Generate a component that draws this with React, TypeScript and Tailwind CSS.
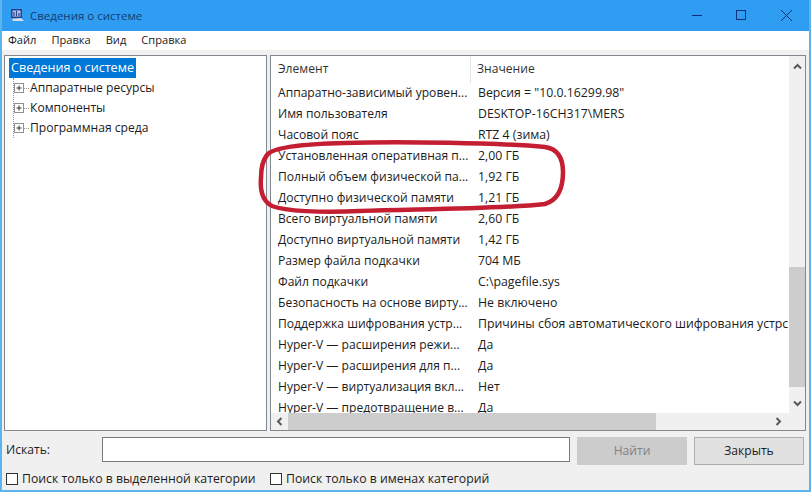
const rows = [
  ['Аппаратно-зависимый уровен...', 'Версия = "10.0.16299.98"'],
  ['Имя пользователя', 'DESKTOP-16CH317\\MERS'],
  ['Часовой пояс', 'RTZ 4 (зима)'],
  ['Установленная оперативная п...', '2,00 ГБ'],
  ['Полный объем физической па...', '1,92 ГБ'],
  ['Доступно физической памяти', '1,21 ГБ'],
  ['Всего виртуальной памяти', '2,60 ГБ'],
  ['Доступно виртуальной памяти', '1,42 ГБ'],
  ['Размер файла подкачки', '704 МБ'],
  ['Файл подкачки', 'C:\\pagefile.sys'],
  ['Безопасность на основе вирту...', 'Не включено'],
  ['Поддержка шифрования устр...', 'Причины сбоя автоматического шифрования устрс'],
  ['Hyper-V — расширения режи...', 'Да'],
  ['Hyper-V — расширения для п...', 'Да'],
  ['Hyper-V — виртуализация вкл...', 'Нет'],
  ['Hyper-V — предотвращение в...', 'Да'],
];

function Expander() {
  return (
    <svg width="10" height="10" viewBox="0 0 10 10" className="shrink-0">
      <rect x="0.5" y="0.5" width="9" height="9" fill="#fff" stroke="#8f8f8f" />
      <path d="M2.5 5H7.5M5 2.5V7.5" stroke="#333" />
    </svg>
  );
}

function TreeItem({ label }: { label: string }) {
  return (
    <div className="flex items-center h-5 pl-[5px]">
      <Expander />
      <div className="w-[5px] border-t border-dotted border-[#999]" />
      <span className="ml-px">{label}</span>
    </div>
  );
}

function Arrow({ d, className }: { d: string; className: string }) {
  return (
    <svg width="9" height="7" viewBox="0 0 9 7" className={className}>
      <path d={d} fill="none" stroke="#5a5a5a" strokeWidth="2" />
    </svg>
  );
}

export default function App() {
  return (
    <div className="relative w-[811px] h-[492px] overflow-hidden bg-[#f0f0f0] border-x-2 border-b-2 border-[#5cb4ec] font-['Open_Sans','Noto_Sans',sans-serif] text-[12.1px] text-[#1c1c1c]">
      {/* title bar */}
      <div className="-mx-[2px] h-[31px] bg-[#2f9df2] flex items-center pl-[10px]">
        <svg width="15" height="15" viewBox="0 0 15 15" className="shrink-0">
          <rect x="1" y="1" width="11" height="9" fill="#27408f" />
          <rect x="2.5" y="2.5" width="8" height="6" fill="#b9c9ea" />
          <path d="M4 8V4M6.5 8V3M9 8V5" stroke="#27408f" strokeWidth="1.2" />
          <path d="M2 11L11 10L14 13H3Z" fill="#d8dde8" />
        </svg>
        <span className="ml-[5px] text-[11.5px] text-[#123c72]">Сведения о системе</span>
        <svg width="100" height="12" viewBox="0 0 100 12" className="ml-auto mr-[19px]">
          <path d="M0 5.5H10" stroke="#12307a" />
          <rect x="44.5" y="0.5" width="9" height="9" fill="none" stroke="#12307a" />
          <path d="M89 0L100 11M100 0L89 11" stroke="#12307a" />
        </svg>
      </div>

      {/* menu */}
      <div className="-mx-[2px] pl-[8px] h-[19px] bg-white flex items-center gap-[15px] text-[11.1px]">
        <span>Файл</span>
        <span>Правка</span>
        <span>Вид</span>
        <span>Справка</span>
      </div>

      {/* panes */}
      <div className="flex gap-[3px] mt-[5px] ml-[2px] h-[376px] w-[802px]">
        <div className="w-[263px] bg-white border border-[#828790] pt-[2px] pl-[4px]">
          <div className="w-fit h-5 px-[2px] flex items-center bg-[#0078d7] text-white text-[12.6px]">Сведения о системе</div>
          <div className="border-l border-dotted border-[#999] ml-[5px] h-[60px] -translate-x-[1px] -mb-[60px]" />
          <TreeItem label="Аппаратные ресурсы" />
          <TreeItem label="Компоненты" />
          <TreeItem label="Программная среда" />
        </div>

        <div className="w-[536px] bg-white border border-[#828790] flex flex-col">
          <div className="flex flex-1 min-h-0">
            <div className="flex-1 min-w-0 overflow-hidden">
              <div className="flex h-[27px] items-center text-[#333]">
                <div className="w-[200px] pl-[7px] h-full flex items-center border-r border-[#e5e5e5]">Элемент</div>
                <div className="pl-[6px]">Значение</div>
              </div>
              {rows.map(([name, value]) => (
                <div key={name} className="flex h-[21px] items-center whitespace-nowrap">
                  <div className="w-[200px] pl-[7px] shrink-0">{name}</div>
                  <div className="pl-[7px] text-[12.3px]">{value}</div>
                </div>
              ))}
            </div>
            <div className="w-[16px] bg-[#f0f0f0] flex flex-col items-center">
              <Arrow d="M1 5.5L4.5 2L8 5.5" className="mt-[7px]" />
              <div className="w-full h-[120px] bg-[#cdcdcd] mt-[197px]" />
              <Arrow d="M1 1.5L4.5 5L8 1.5" className="mt-[13px]" />
            </div>
          </div>
          <div className="h-[17px] bg-[#f0f0f0] flex items-center pl-[5px]">
            <svg width="7" height="9" viewBox="0 0 7 9" className="shrink-0">
              <path d="M5.5 1L2 4.5L5.5 8" fill="none" stroke="#5a5a5a" strokeWidth="2" />
            </svg>
            <div className="w-[368px] h-full bg-[#cdcdcd] ml-[5px]" />
            <svg width="7" height="9" viewBox="0 0 7 9" className="shrink-0 ml-auto mr-[23px]">
              <path d="M1.5 1L5 4.5L1.5 8" fill="none" stroke="#5a5a5a" strokeWidth="2" />
            </svg>
          </div>
        </div>
      </div>

      {/* search */}
      <div className="flex items-start mt-[6px] ml-[4px] h-[28px]">
        <span className="w-[96px] mt-[4px]">Искать:</span>
        <div className="w-[468px] h-[25px] bg-white border border-[#7a7a7a]" />
        <div className="w-[110px] h-[28px] ml-[7px] bg-[#cccccc] flex items-center justify-center text-[#838383]">Найти</div>
        <div className="w-[110px] h-[28px] ml-[7px] bg-[#e1e1e1] border border-[#adadad] flex items-center justify-center">Закрыть</div>
      </div>

      {/* checkboxes */}
      <div className="flex items-center mt-[4px] ml-[4px] h-[20px] text-[12.25px]">
        <div className="w-[12px] h-[12px] bg-white border border-[#333]" />
        <span className="ml-[4px] w-[248px]">Поиск только в выделенной категории</span>
        <div className="w-[12px] h-[12px] bg-white border border-[#333]" />
        <span className="ml-[4px]">Поиск только в именах категорий</span>
      </div>

      {/* red marker drawn over the screenshot */}
      <svg width="811" height="492" viewBox="0 0 811 492" className="absolute -left-[2px] top-0 pointer-events-none">
        <path
          d="M267 155C272 148 300 144 345 143C400 141 500 143 545 147C558 149 563 158 563 172C563 188 558 200 545 204C500 209 420 209 360 211C320 213 285 211 272 206C262 201 260 190 261 178C261 168 263 160 267 155Z"
          fill="none"
          stroke="#c41e33"
          strokeWidth="4.5"
        />
      </svg>
    </div>
  );
}
